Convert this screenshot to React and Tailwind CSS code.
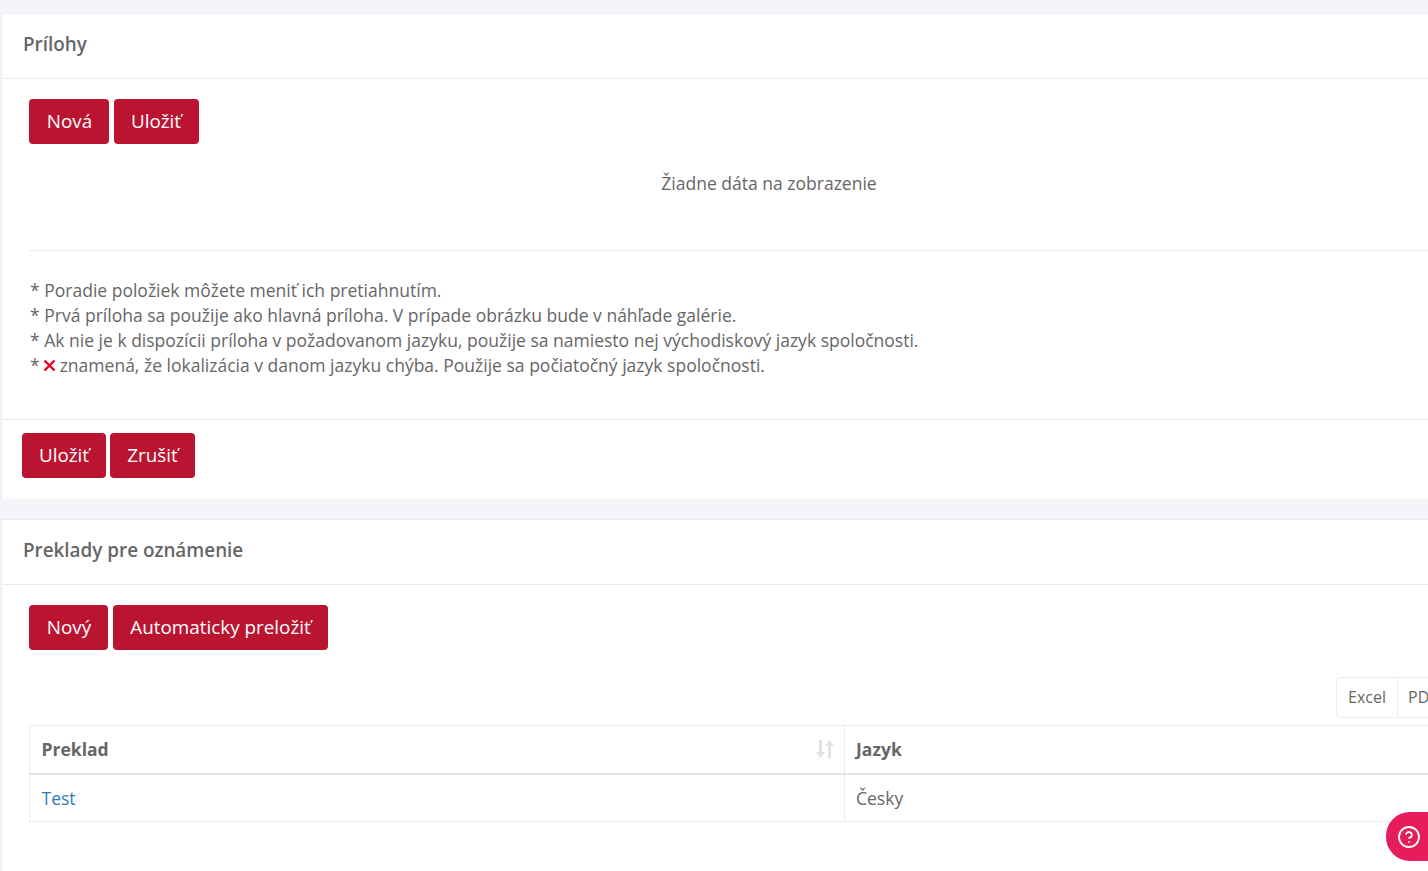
import { CircleHelp } from "lucide-react";

function RedButton({ children, className = "" }) {
  return (
    <button
      type="button"
      className={`h-[45px] rounded-[4px] bg-[#bb1431] pb-px text-[18.85px] leading-[25px] text-white ${className}`}
    >
      {children}
    </button>
  );
}

function CardHeader({ title }) {
  return (
    <div className="flex h-[65px] items-start border-b border-[#e9ebf0] pt-[16px] pl-[21px]">
      <h3 className="text-[18.85px] leading-[28px] font-semibold text-[#666666]">{title}</h3>
    </div>
  );
}

function SortIcon() {
  return (
    <svg width="18" height="20" viewBox="0 0 18 20" fill="#e2e2e2">
      <path d="M3 1h3v12h3l-4.5 6L0 13h3z" />
      <path d="M13.5 1L18 7h-3v12h-3V7H9z" />
    </svg>
  );
}

function RedCross() {
  return (
    <svg width="13" height="13" viewBox="0 0 13 13" stroke="#e8001c" strokeWidth="2.4" fill="none">
      <path d="M1.5 1.5l10 10M11.5 1.5l-10 10" />
    </svg>
  );
}

export default function App() {
  return (
    <div
      className="relative h-[871px] w-[1428px] overflow-hidden bg-[#f4f5f9] pt-[13px] pl-px text-[#666666]"
      style={{ fontFamily: '"Open Sans", sans-serif' }}
    >
      <div className="h-[486px] w-[1600px] border-t border-l border-[#e9ebf0] bg-white">
        <CardHeader title="Prílohy" />
        <div className="h-[341px] border-b border-[#e9ebf0] pt-[20px] pl-[27px]">
          <div className="flex gap-[5px]">
            <RedButton className="w-[80px] pl-px">Nová</RedButton>
            <RedButton className="w-[85px] pr-px">Uložiť</RedButton>
          </div>
          <div className="h-[106px] w-[1480px] pt-[27px] text-center text-[17.53px] leading-[25px]">
            Žiadne dáta na zobrazenie
          </div>
          <div className="w-[1480px] border-t border-[#e9ebf0] pt-[27px] pl-px text-[17.53px] leading-[25px]">
            <p>* Poradie položiek môžete meniť ich pretiahnutím.</p>
            <p>* Prvá príloha sa použije ako hlavná príloha. V prípade obrázku bude v náhľade galérie.</p>
            <p>* Ak nie je k dispozícii príloha v požadovanom jazyku, použije sa namiesto nej východiskový jazyk spoločnosti.</p>
            <p className="flex items-center">
              <span>*</span>
              <span className="mr-[4px] ml-[3px] flex">
                <RedCross />
              </span>
              <span>znamená, že lokalizácia v danom jazyku chýba. Použije sa počiatočný jazyk spoločnosti.</span>
            </p>
          </div>
        </div>
        <div className="flex gap-[4px] pt-[13px] pl-[20px]">
          <RedButton className="w-[84px]">Uložiť</RedButton>
          <RedButton className="w-[85px]">Zrušiť</RedButton>
        </div>
      </div>

      <div className="mt-[20px] h-[400px] w-[1600px] border-t border-l border-[#e9ebf0] bg-white">
        <CardHeader title="Preklady pre oznámenie" />
        <div className="pt-[20px] pl-[27px]">
          <div className="flex gap-[5px]">
            <RedButton className="w-[79px] pl-px">Nový</RedButton>
            <RedButton className="w-[215px]">Automaticky preložiť</RedButton>
          </div>
          <div className="mt-[27px] ml-[1307px] flex h-[41px] w-[130px] items-center rounded-[4px] border border-[#e9ebf0] pb-px text-[16px]">
            <span className="flex h-full w-[61px] items-center justify-center border-r border-[#e9ebf0]">Excel</span>
            <span className="pl-[10px]">PDF</span>
          </div>
          <table className="mt-[7px] w-[1480px] table-fixed border-collapse text-[17.53px]">
            <tbody>
              <tr className="h-[48px]">
                <th className="w-[815px] border border-b-2 border-[#e9ebf0] border-b-[#e2e3e6] pr-[12px] pl-[11.5px] text-left font-bold">
                  <div className="flex items-center justify-between">
                    <span>Preklad</span>
                    <span className="mr-[-2px] flex">
                      <SortIcon />
                    </span>
                  </div>
                </th>
                <th className="border border-b-2 border-[#e9ebf0] border-b-[#e2e3e6] px-[11px] text-left font-bold">Jazyk</th>
              </tr>
              <tr className="h-[48px]">
                <td className="border border-[#e9ebf0] pr-[12px] pl-[11.5px] text-[#337ab7]">Test</td>
                <td className="border border-[#e9ebf0] px-[11px]">Česky</td>
              </tr>
            </tbody>
          </table>
        </div>
      </div>

      <div className="absolute top-[812px] left-[1386px] flex h-[49px] w-[60px] items-center rounded-l-[24px] bg-[#e61c5d] pl-[11px]">
        <CircleHelp size={24} strokeWidth={1.8} className="text-white" />
      </div>
    </div>
  );
}
